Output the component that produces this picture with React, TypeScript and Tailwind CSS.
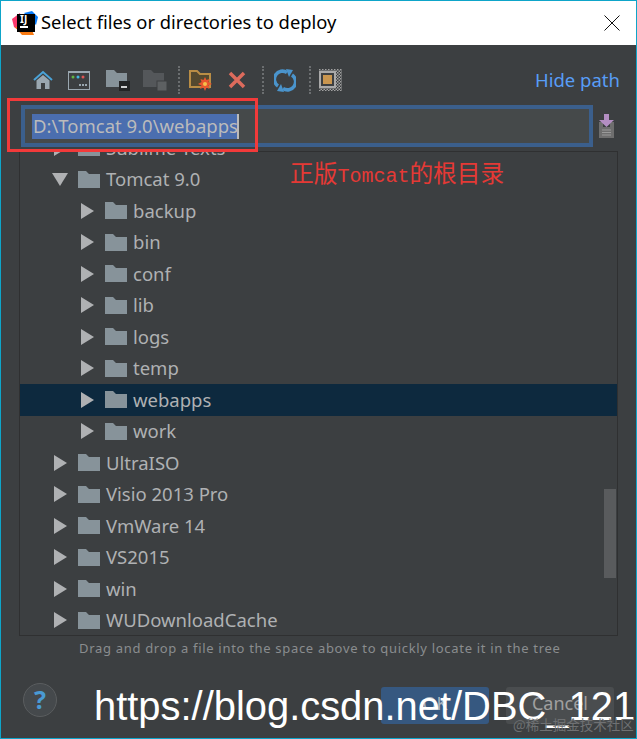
import React from 'react';

type Row = { name: string; level: number; open?: boolean; selected?: boolean };

const rows: Row[] = [
  { name: 'Sublime Texts', level: 1 },
  { name: 'Tomcat 9.0', level: 1, open: true },
  { name: 'backup', level: 2 },
  { name: 'bin', level: 2 },
  { name: 'conf', level: 2 },
  { name: 'lib', level: 2 },
  { name: 'logs', level: 2 },
  { name: 'temp', level: 2 },
  { name: 'webapps', level: 2, selected: true },
  { name: 'work', level: 2 },
  { name: 'UltraISO', level: 1 },
  { name: 'Visio 2013 Pro', level: 1 },
  { name: 'VmWare 14', level: 1 },
  { name: 'VS2015', level: 1 },
  { name: 'win', level: 1 },
  { name: 'WUDownloadCache', level: 1 },
];

const Folder = ({ color = '#87939a' }: { color?: string }) => (
  <svg width="22" height="17" viewBox="0 0 22 17">
    <path d="M0 0H8L11 3H22V17H0Z" fill={color} />
  </svg>
);

const Arrow = ({ open }: { open?: boolean }) =>
  open ? (
    <svg width="16" height="13" viewBox="0 0 16 13">
      <path d="M0 0H16L8 13Z" fill="#afb1b3" />
    </svg>
  ) : (
    <svg className="ml-[2px]" width="13" height="16" viewBox="0 0 13 16">
      <path d="M0 0L13 8L0 16Z" fill="#afb1b3" />
    </svg>
  );

const TreeRow = ({ row }: { row: Row }) => (
  <div className={`flex h-[31.5px] shrink-0 items-center ${row.selected ? 'bg-[#0d293e]' : ''} ${row.level === 2 ? 'pl-[59px]' : 'pl-[32px]'}`}>
    <div className="flex w-[26px] shrink-0 items-center">
      <Arrow open={row.open} />
    </div>
    <Folder />
    <span className="ml-[6px] text-[18.5px] leading-none whitespace-nowrap text-[#afb1b3]">{row.name}</span>
  </div>
);

const Separator = () => <div className="h-[28px] w-0 border-l-2 border-dotted border-[#6b6e70]" />;

const HomeIcon = () => (
  <svg width="20" height="20" viewBox="0 0 20 20">
    <path d="M1 10L10 2L19 10" fill="none" stroke="#4aa3d8" strokeWidth="2" />
    <path d="M3.500 10.500L10 5L16.500 10.500V19H12V13H8V19H3.500Z" fill="#9aa7b0" />
  </svg>
);

const TerminalIcon = () => (
  <svg width="22" height="19" viewBox="0 0 22 19">
    <rect x="0.500" y="0.500" width="21" height="18" fill="#3c3f41" stroke="#9aa7b0" />
    <rect x="0" y="0" width="22" height="2" fill="#9aa7b0" />
    <circle cx="5" cy="6" r="1.500" fill="#62b543" />
    <circle cx="10" cy="6" r="1.500" fill="#40b6e0" />
    <circle cx="15" cy="6" r="1.500" fill="#e05555" />
    <rect x="11" y="13" width="2" height="2" fill="#9aa7b0" />
    <rect x="14" y="13" width="2" height="2" fill="#9aa7b0" />
    <rect x="17" y="13" width="2" height="2" fill="#9aa7b0" />
  </svg>
);

const FolderBadge = () => (
  <svg width="24" height="21" viewBox="0 0 24 21">
    <path d="M0 0H8L11 3H21V17H0Z" fill="#87939a" />
    <rect x="13" y="11" width="11" height="10" fill="#232425" />
    <rect x="15" y="16" width="6" height="2" fill="#d0d0d0" />
  </svg>
);

const FolderDim = () => (
  <svg width="24" height="21" viewBox="0 0 24 21">
    <path d="M0 0H8L11 3H21V17H0Z" fill="#54575a" />
    <rect x="14" y="11" width="10" height="10" stroke="#3c3f41" fill="#5d6062" />
  </svg>
);

const NewFolder = () => (
  <svg width="23" height="21" viewBox="0 0 23 21">
    <path d="M1 1H8L11 4H21V17H1Z" fill="#54492f" stroke="#b98d45" strokeWidth="2" />
    <path d="M16 7L17.500 10L20.500 9L19.500 12L23 14L19.500 15.500L20.500 19L17.500 17.500L16 21L14.500 17.500L11 19L12.500 15.500L9 14L12.500 12L11.500 9L14.500 10Z" fill="#e8562f" />
    <circle cx="16" cy="14" r="2" fill="#f5c04a" />
  </svg>
);

const DeleteIcon = () => (
  <svg width="18" height="18" viewBox="0 0 18 18">
    <path d="M2 2L16 16M16 2L2 16" stroke="#dd6b5c" strokeWidth="3.500" fill="none" />
  </svg>
);

const RefreshIcon = () => (
  <svg width="22" height="23" viewBox="0 0 22 23">
    <path d="M4 17A8 8 0 0 1 13 3.500" fill="none" stroke="#4a94cc" strokeWidth="3.500" />
    <path d="M18 6A8 8 0 0 1 9 19.500" fill="none" stroke="#4a94cc" strokeWidth="3.500" />
    <path d="M12 0L19 1L15 8Z" fill="#4a94cc" />
    <path d="M10 23L3 22L7 15Z" fill="#4a94cc" />
  </svg>
);

const ChipIcon = () => (
  <svg width="23" height="22" viewBox="0 0 23 22">
    <defs>
      <pattern id="checker" width="3" height="3" patternUnits="userSpaceOnUse">
        <rect width="3" height="3" fill="#3c3f41" />
        <rect width="1.500" height="1.500" fill="#a0a0a0" />
        <rect x="1.500" y="1.500" width="1.500" height="1.500" fill="#a0a0a0" />
      </pattern>
    </defs>
    <rect width="23" height="22" fill="url(#checker)" />
    <rect x="1" y="3" width="15" height="15" fill="#3c3f41" stroke="#a9a9a9" strokeWidth="2" />
    <rect x="4" y="6" width="9" height="9" fill="#c9964f" />
  </svg>
);

const DropIcon = () => (
  <svg width="17" height="24" viewBox="0 0 17 24">
    <path d="M1 8H5V13H12V8H16V24H1Z" fill="#6e6e6e" />
    <path d="M4 16H13M4 18.500H13M4 21H13" stroke="#9a9a9a" />
    <path d="M6 0H11V6H16L8.500 13L1 6H6Z" fill="#b38ec2" />
  </svg>
);

const AppLogo = () => (
  <svg width="26" height="24" viewBox="0 0 26 24">
    <path d="M0 8L8 2L10 22L2 16Z" fill="#fc3a6d" />
    <path d="M12 2L20 0L26 6L24 14Z" fill="#087cfa" />
    <path d="M3 16L10 24H22L18 14Z" fill="#f97a12" />
  </svg>
);

export default function App() {
  return (
    <div
      className="relative flex h-[739px] w-[637px] flex-col overflow-hidden border border-[#0ea5c9] bg-[#3c3f41]"
      style={{ fontFamily: '"Noto Sans", sans-serif' }}
    >
      {/* Title bar */}
      <div className="flex h-[44px] shrink-0 items-center bg-white pr-[16px] pl-[11px]">
        <div className="relative h-[24px] w-[26px] shrink-0">
          <AppLogo />
          <div className="absolute top-[3px] left-[5px] flex h-[18px] w-[18px] flex-col bg-black px-[3px] text-[10px] leading-[11px] font-bold text-white">
            <span>IJ</span>
            <div className="mt-[1px] h-[2px] w-[8px] bg-white" />
          </div>
        </div>
        <span className="-mt-[2px] ml-[3px] text-[18.35px] text-black">Select files or directories to deploy</span>
        <svg className="ml-auto" width="16" height="16" viewBox="0 0 16 16">
          <path d="M0.500 0.500L15.500 15.500M15.500 0.500L0.500 15.500" stroke="#111" fill="none" />
        </svg>
      </div>

      {/* Toolbar */}
      <div className="flex h-[60px] shrink-0 items-center pt-[10px] pr-[16px] pl-[32px]">
        <HomeIcon />
        <div className="ml-[15px]"><TerminalIcon /></div>
        <div className="ml-[16px]"><FolderBadge /></div>
        <div className="ml-[13px]"><FolderDim /></div>
        <div className="mr-[9px] ml-[11px]"><Separator /></div>
        <NewFolder />
        <div className="ml-[16px]"><DeleteIcon /></div>
        <div className="mr-[10px] ml-[16px]"><Separator /></div>
        <RefreshIcon />
        <div className="mr-[8px] ml-[13px]"><Separator /></div>
        <ChipIcon />
        <span className="ml-auto text-[18.5px] text-[#589df6]">Hide path</span>
      </div>

      {/* Path field */}
      <div className="z-10 flex shrink-0 items-center pr-[21px] pl-[20px]">
        <div className="flex h-[42px] flex-1 items-center border-4 border-[#3b5f8c] bg-[#45494a] pl-[7px]">
          <span className="flex h-[25px] w-[205px] items-center bg-[#4b6eaf] pl-[1px] text-[18.5px] leading-none whitespace-nowrap text-[#bbbbbb]">
            D:\Tomcat 9.0\webapps
          </span>
          <div className="h-[25px] w-[2px] bg-[#bbbbbb]" />
        </div>
        <div className="ml-[5px]"><DropIcon /></div>
      </div>

      {/* Tree */}
      <div className="relative mt-[4px] mr-[18px] ml-[18px] flex h-[485px] shrink-0 flex-col overflow-hidden border border-[#2f3031]">
        <div className="-mt-[20px] flex flex-col">
          {rows.map((r) => (
            <TreeRow key={r.name} row={r} />
          ))}
        </div>
        <div className="absolute top-[337px] right-[1px] h-[89px] w-[12px] bg-[#595b5d]" />
      </div>

      <p className="mt-[3px] ml-[78px] text-[13px] tracking-[0.69px] text-[#8a8d8f]">
        Drag and drop a file into the space above to quickly locate it in the tree
      </p>

      {/* Footer */}
      <div className="mt-[24px] flex items-start pr-[22px] pl-[22px]">
        <div className="flex h-[34px] w-[34px] items-center justify-center rounded-full border border-[#5a5d5f] bg-[#45494c] text-[25px] leading-none font-bold text-[#4a9ad4]">
          ?
        </div>
        <button className="mt-[4px] ml-auto h-[37px] w-[108px] rounded-[3px] bg-[#365880] pb-[3px] text-[18px] text-[#a9b4bf]">OK</button>
        <button className="mt-[4px] ml-[17px] h-[37px] w-[108px] rounded-[3px] bg-[#4a4d4f] pb-[3px] text-[18px] text-[#a0a0a0]">Cancel</button>
      </div>

      {/* Screenshot annotations */}
      <div className="absolute top-[97px] left-[6px] z-20 h-[54px] w-[251px] border-[3px] border-[#f23a3a]" />
      <div
        className="absolute top-[161px] left-[289px] z-20 text-[23.7px] leading-[28px] whitespace-nowrap text-[#e53935]"
        style={{ fontFamily: '"Liberation Mono", "Noto Sans CJK SC", monospace' }}
      >
        正版<span className="text-[20px]">Tomcat</span>的根目录
      </div>
      <div
        className="absolute top-[680px] left-[93px] z-20 text-[39.9px] leading-[50px] whitespace-nowrap text-white"
        style={{ fontFamily: '"Liberation Sans", sans-serif' }}
      >
        https://blog.csdn.net/DBC_121
      </div>
      <div
        className="absolute top-[714px] left-[512px] z-20 text-[13.5px] leading-[18px] whitespace-nowrap text-[#6f7173]"
        style={{ fontFamily: '"Noto Sans CJK SC", sans-serif' }}
      >
        @稀土掘金技术社区
      </div>
    </div>
  );
}
